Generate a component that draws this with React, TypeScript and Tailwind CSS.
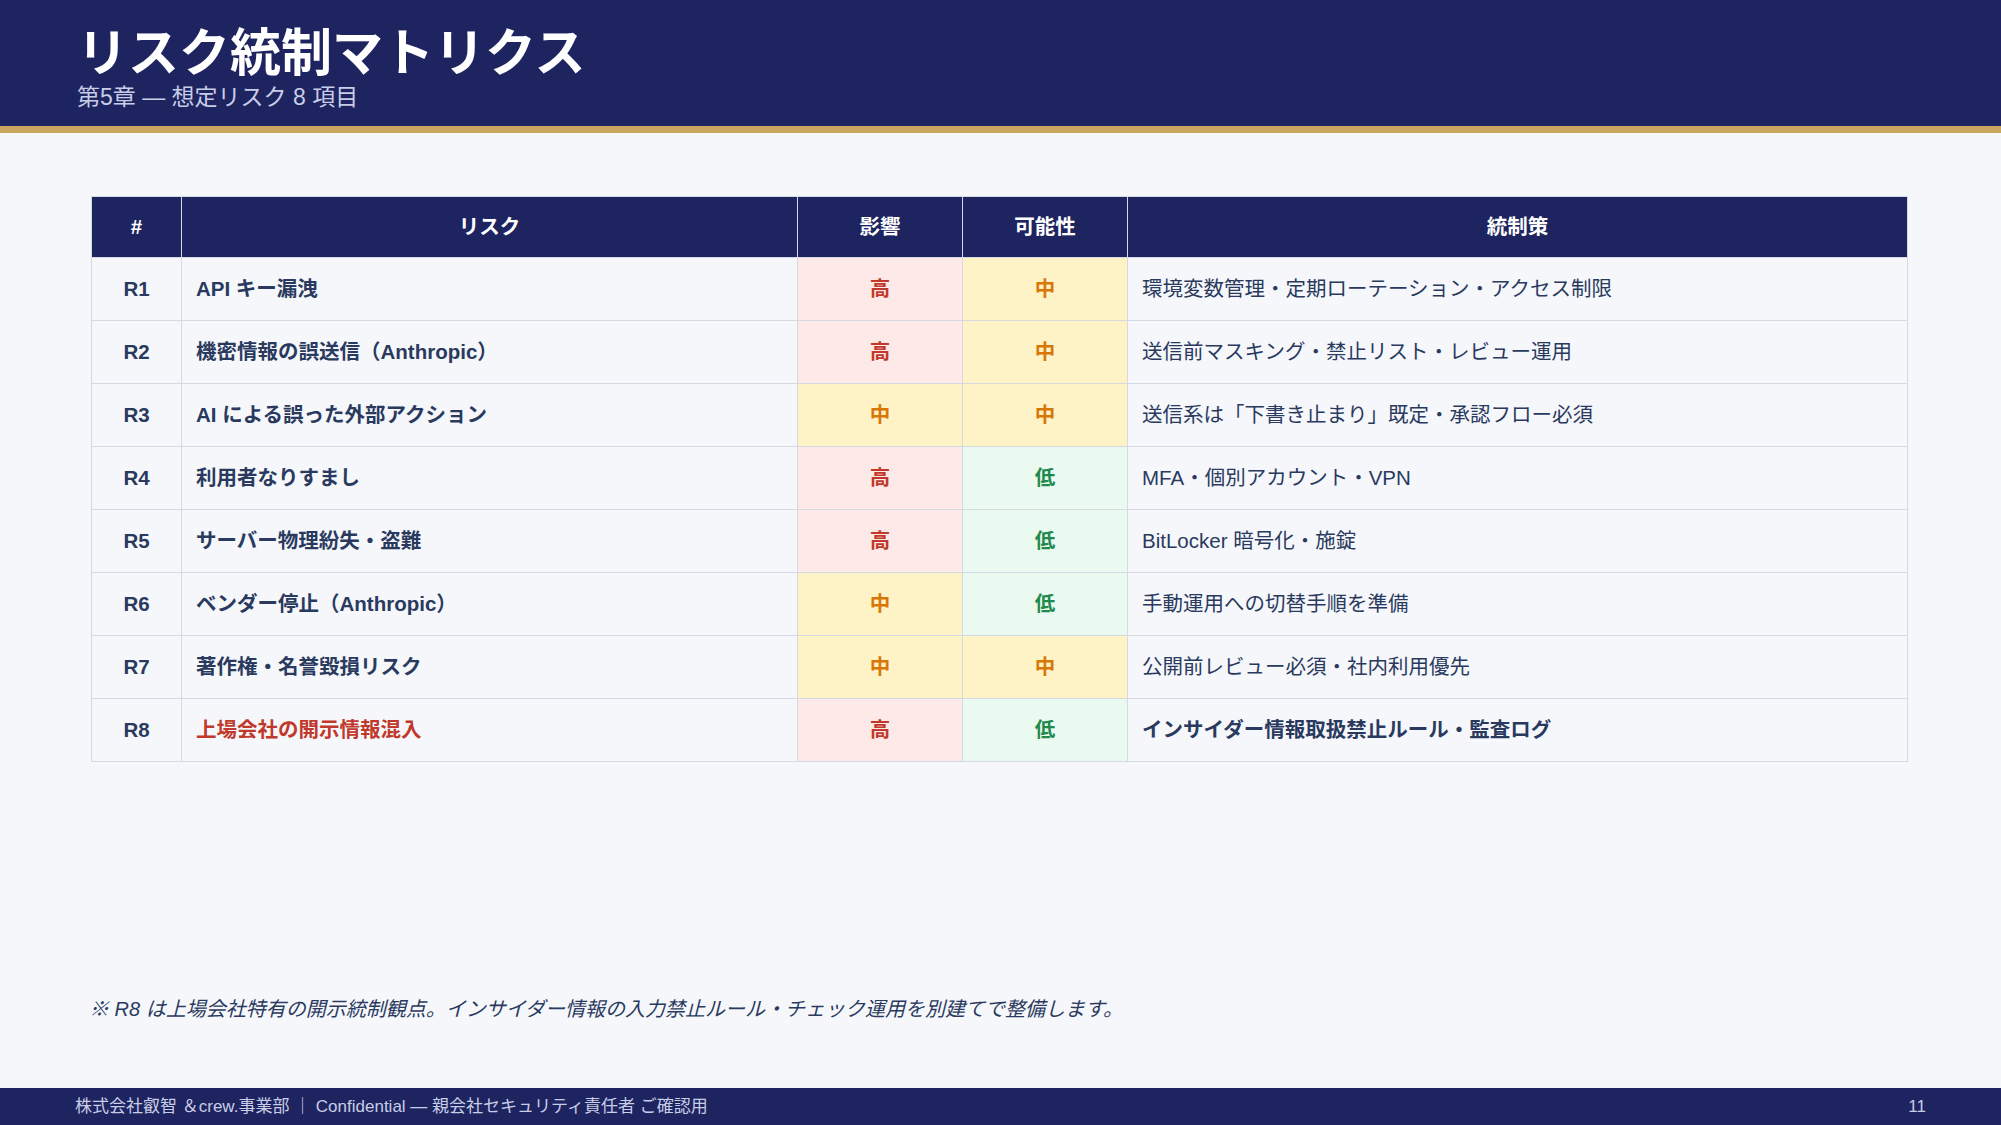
const rows: [string, string, string, string, string][] = [
  ['R1', 'API キー漏洩', '高', '中', '環境変数管理・定期ローテーション・アクセス制限'],
  ['R2', '機密情報の誤送信（Anthropic）', '高', '中', '送信前マスキング・禁止リスト・レビュー運用'],
  ['R3', 'AI による誤った外部アクション', '中', '中', '送信系は「下書き止まり」既定・承認フロー必須'],
  ['R4', '利用者なりすまし', '高', '低', 'MFA・個別アカウント・VPN'],
  ['R5', 'サーバー物理紛失・盗難', '高', '低', 'BitLocker 暗号化・施錠'],
  ['R6', 'ベンダー停止（Anthropic）', '中', '低', '手動運用への切替手順を準備'],
  ['R7', '著作権・名誉毀損リスク', '中', '中', '公開前レビュー必須・社内利用優先'],
  ['R8', '上場会社の開示情報混入', '高', '低', 'インサイダー情報取扱禁止ルール・監査ログ'],
];

function Level({ v }: { v: string }) {
  const cls =
    v === '高'
      ? 'bg-[#fde9e7] text-[#c0392b]'
      : v === '中'
        ? 'bg-[#fef3c7] text-[#d97706]'
        : 'bg-[#ebfaf1] text-[#1f8a4c]';
  return <td className={`border border-[#d5d9e2] text-center font-bold ${cls}`}>{v}</td>;
}

export default function App() {
  const font = { fontFamily: '"Liberation Sans", "Noto Sans CJK JP", sans-serif' };
  return (
    <div className="w-[2001px] h-[1125px] bg-[#f5f7fb] flex flex-col text-[#2a3a5e]" style={font}>
      <header className="h-[133px] shrink-0 bg-[#1e245f] border-b-[7px] border-[#c9a65f] pl-[77px] pt-[26px]">
        <h1 className="text-[51px] leading-[56px] font-bold text-white">リスク統制マトリクス</h1>
        <p className="text-[23px] leading-[30px] text-[#c8cde8]">第5章 — 想定リスク 8 項目</p>
      </header>
      <main className="flex-1 px-[91px] pt-[63px]">
        <table className="w-[1817px] border-collapse text-[20.5px]">
          <thead>
            <tr className="h-[61px] bg-[#1e245f] text-white font-bold">
              <th className="w-[90px] border border-[#d5d9e2]">#</th>
              <th className="w-[616px] border border-[#d5d9e2]">リスク</th>
              <th className="w-[165px] border border-[#d5d9e2]">影響</th>
              <th className="w-[165px] border border-[#d5d9e2]">可能性</th>
              <th className="border border-[#d5d9e2]">統制策</th>
            </tr>
          </thead>
          <tbody>
            {rows.map(([id, risk, imp, prob, ctl]) => (
              <tr key={id} className="h-[63px]">
                <td className="border border-[#d5d9e2] text-center font-bold">{id}</td>
                <td className={`border border-[#d5d9e2] px-[14px] font-bold ${id === 'R8' ? 'text-[#c0392b]' : ''}`}>{risk}</td>
                <Level v={imp} />
                <Level v={prob} />
                <td className={`border border-[#d5d9e2] px-[14px] ${id === 'R8' ? 'font-bold' : ''}`}>{ctl}</td>
              </tr>
            ))}
          </tbody>
        </table>
        <p className="mt-[232px] -ml-[2px] text-[20px] italic text-[#2a3a5e]">※ R8 は上場会社特有の開示統制観点。インサイダー情報の入力禁止ルール・チェック運用を別建てで整備します。</p>
      </main>
      <footer className="h-[37px] shrink-0 bg-[#1e245f] flex items-center justify-between px-[75px] text-[17px] text-[#c8cde8]">
        <span>株式会社叡智 ＆crew.事業部 ｜ Confidential — 親会社セキュリティ責任者 ご確認用</span>
        <span>11</span>
      </footer>
    </div>
  );
}
